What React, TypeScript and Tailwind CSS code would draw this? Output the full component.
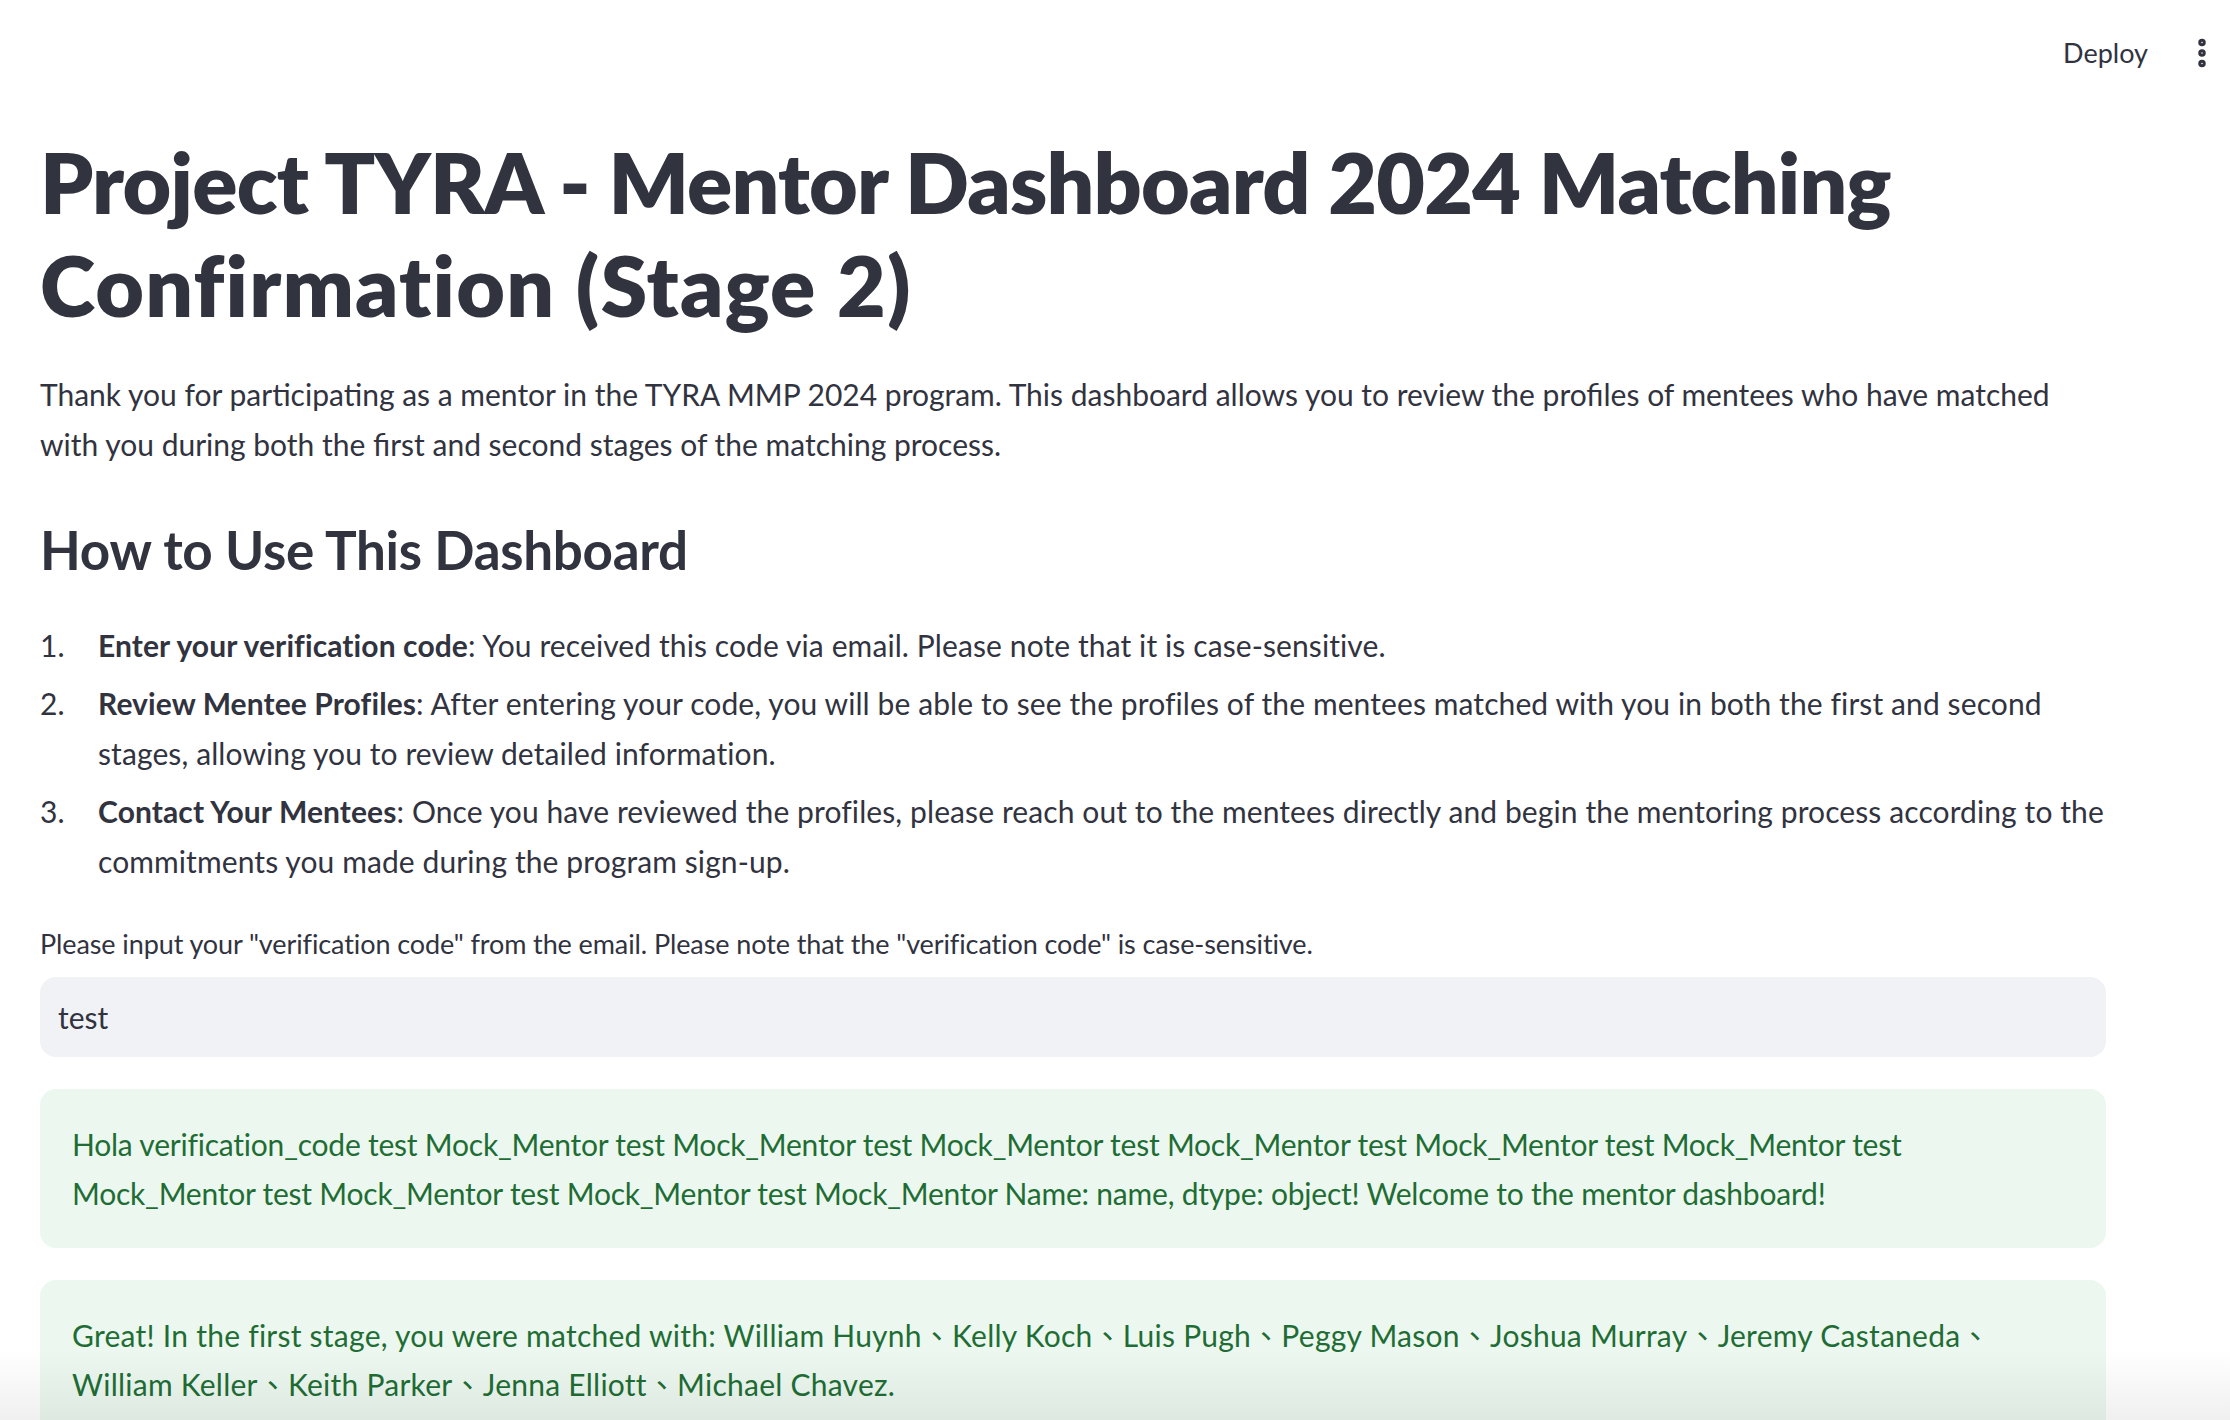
import { EllipsisVertical } from "lucide-react";

const font = { fontFamily: 'Lato, "Noto Sans CJK TC", sans-serif' };

const steps = [
  {
    title: "Enter your verification code",
    lines: ["You received this code via email. Please note that it is case-sensitive."],
  },
  {
    title: "Review Mentee Profiles",
    lines: [
      "After entering your code, you will be able to see the profiles of the mentees matched with you in both the first and second",
      "stages, allowing you to review detailed information.",
    ],
  },
  {
    title: "Contact Your Mentees",
    lines: [
      "Once you have reviewed the profiles, please reach out to the mentees directly and begin the mentoring process according to the",
      "commitments you made during the program sign-up.",
    ],
  },
];

function Alert({ lines, className }: { lines: string[]; className?: string }) {
  return (
    <div
      className={`rounded-[16px] bg-[#ecf8ef] px-[32px] py-[31px] text-[30px] leading-[48.5px] text-[#1f6d35] ${className ?? ""}`}
    >
      {lines.map((l, i) => (
        <div key={i} className="whitespace-nowrap">
          {l}
        </div>
      ))}
    </div>
  );
}

export default function App() {
  return (
    <div className="relative h-[1420px] w-[2230px] overflow-hidden bg-white text-[#31333f]" style={font}>
      <header className="flex h-[106px] items-center justify-end gap-[36px] pr-[10px]">
        <span className="text-[27px]">Deploy</span>
        <EllipsisVertical className="h-[36px] w-[36px]" strokeWidth={3} />
      </header>

      <main className="w-[2106px] pl-[40px]">
        <h1 className="mt-[24px] text-[84px] font-extrabold leading-[103px] tracking-[-0.8px]">
          Project TYRA - Mentor Dashboard 2024 Matching
          <br />
          <span className="tracking-[1.2px]">Confirmation (Stage 2)</span>
        </h1>

        <p className="mt-[33px] text-[30px] leading-[50px]">
          Thank you for participating as a mentor in the TYRA MMP 2024 program. This dashboard allows you to review the profiles of mentees who have matched
          <br />
          with you during both the first and second stages of the matching process.
        </p>

        <h3 className="mt-[48px] text-[53px] font-bold leading-[66px] tracking-[-0.3px]">How to Use This Dashboard</h3>

        <ol className="mt-[37px] flex flex-col gap-[8px] text-[30px] leading-[50px] tracking-[0.1px]">
          {steps.map((s, i) => (
            <li key={s.title} className="flex">
              <span className="w-[58px] shrink-0">{i + 1}.</span>
              <div>
                {s.lines.map((l, j) => (
                  <div key={j} className="whitespace-nowrap">
                    {j === 0 && <strong className="font-bold">{s.title}</strong>}
                    {j === 0 ? ": " : ""}
                    {l}
                  </div>
                ))}
              </div>
            </li>
          ))}
        </ol>

        <label className="mt-[38px] block text-[27px] leading-[40px] tracking-[-0.1px]">
          Please input your "verification code" from the email. Please note that the "verification code" is case-sensitive.
        </label>

        <div className="mt-[13px] flex h-[80px] items-center rounded-[16px] bg-[#f0f2f6] px-[18px] text-[30px]">
          test
        </div>

        <div className="mt-[32px] flex flex-col gap-[32px]">
          <Alert
            className="tracking-[-0.22px]"
            lines={[
              "Hola verification_code test Mock_Mentor test Mock_Mentor test Mock_Mentor test Mock_Mentor test Mock_Mentor test Mock_Mentor test",
              "Mock_Mentor test Mock_Mentor test Mock_Mentor test Mock_Mentor Name: name, dtype: object! Welcome to the mentor dashboard!",
            ]}
          />
          <Alert
            className="tracking-[0.25px]"
            lines={[
              "Great! In the first stage, you were matched with: William Huynh、Kelly Koch、Luis Pugh、Peggy Mason、Joshua Murray、Jeremy Castaneda、",
              "William Keller、Keith Parker、Jenna Elliott、Michael Chavez.",
            ]}
          />
        </div>
      </main>

      <div className="pointer-events-none absolute bottom-0 left-0 h-[70px] w-full bg-gradient-to-b from-transparent to-black/[0.06]" />
    </div>
  );
}
